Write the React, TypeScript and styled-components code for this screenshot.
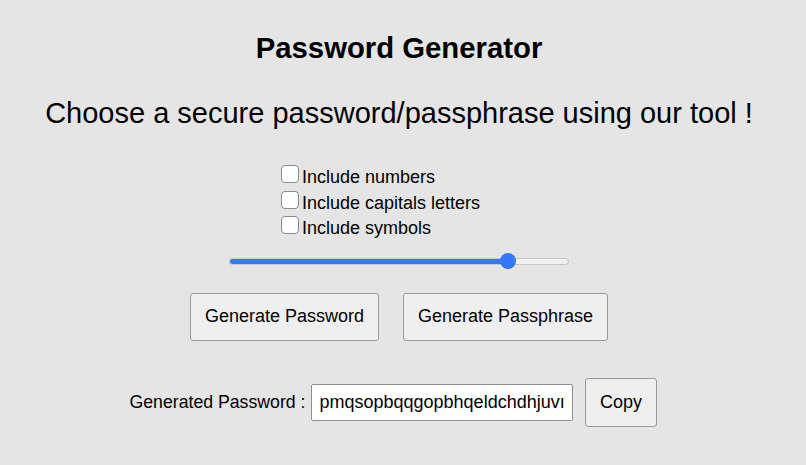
import React, { useState } from "react";
import styled, { createGlobalStyle } from "styled-components";

const Global = createGlobalStyle`
  html, body { margin: 0; padding: 0; background: #e5e5e5; }
  body { font-family: "Liberation Sans", Arial, sans-serif; color: #000; }
`;

const Page = styled.main`
  width: 798px;
  display: flex;
  flex-direction: column;
  align-items: center;
`;

const Title = styled.h1`
  margin: 31px 0 0;
  font-size: 29.3px;
  line-height: 34px;
  font-weight: 700;
`;

const Subtitle = styled.h2`
  margin: 31px 0 0;
  font-size: 29px;
  line-height: 34px;
  font-weight: 400;
  white-space: nowrap;
`;

const Options = styled.div`
  margin-top: 35px;
  width: 238px;
  display: flex;
  flex-direction: column;
`;

const OptionRow = styled.label`
  display: flex;
  align-items: flex-start;
  gap: 3px;
  font-size: 18px;
  line-height: 25.5px;
  padding-left: 1px;
`;

const Box = styled.input`
  appearance: none;
  -webkit-appearance: none;
  margin: 0;
  width: 18px;
  height: 18px;
  box-sizing: border-box;
  border: 1px solid #8a8a8a;
  border-radius: 4px;
  background: #fff;
  flex: none;
`;

const THUMB = 16;
const TRACK_W = 340;

const Range = styled.input<{ $fill: number }>`
  -webkit-appearance: none;
  appearance: none;
  margin: 11.5px 0 0;
  width: ${TRACK_W}px;
  height: 16px;
  background: transparent;
  &::-webkit-slider-runnable-track {
    height: 7px;
    border-radius: 4px;
    box-sizing: border-box;
    border: 1px solid #c6c6c6;
    background: linear-gradient(
      to right,
      #3478f6 0,
      #3478f6 ${(p) => p.$fill}px,
      #efefef ${(p) => p.$fill}px,
      #efefef 100%
    );
  }
  &::-webkit-slider-thumb {
    -webkit-appearance: none;
    width: ${THUMB}px;
    height: ${THUMB}px;
    margin-top: -5.5px;
    border-radius: 50%;
    background: #3478f6;
    border: none;
  }
`;

const Actions = styled.div`
  margin-top: 23.5px;
  display: flex;
  gap: 24px;
`;

const Button = styled.button`
  font-family: "Liberation Sans", Arial, sans-serif;
  font-size: 18px;
  color: #000;
  background: #efefef;
  border: 1px solid #9a9a9a;
  border-radius: 3px;
  padding: 0 14px;
  height: 48px;
  margin: 0;
`;

const ResultRow = styled.div`
  margin-top: 37px;
  padding-right: 12px;
  display: flex;
  align-items: center;
  font-size: 18px;
`;

const ResultLabel = styled.span`
  margin-right: 6px;
  font-size: 17.7px;
`;

const Output = styled.input`
  box-sizing: border-box;
  width: 262px;
  height: 37px;
  margin: 0 12px 0 0;
  padding: 0 7px;
  font-family: "Liberation Sans", Arial, sans-serif;
  font-size: 18px;
  color: #000;
  background: #fff;
  border: 1px solid #8f8f8f;
  border-radius: 2px;
  outline: none;
`;

const CopyButton = styled(Button)`
  height: 49px;
  padding: 0 13.5px;
`;

export default function App() {
  const [len, setLen] = useState(84);
  const options = ["Include numbers", "Include capitals letters", "Include symbols"];
  const fill = THUMB / 2 + (len / 100) * (TRACK_W - THUMB);
  return (
    <>
      <Global />
      <Page>
        <Title>Password Generator</Title>
        <Subtitle>Choose a secure password/passphrase using our tool !</Subtitle>
        <Options>
          {options.map((o) => (
            <OptionRow key={o}>
              <Box type="checkbox" />
              {o}
            </OptionRow>
          ))}
        </Options>
        <Range
          type="range"
          min={0}
          max={100}
          value={len}
          $fill={fill}
          onChange={(e) => setLen(Number(e.target.value))}
        />
        <Actions>
          <Button>Generate Password</Button>
          <Button>Generate Passphrase</Button>
        </Actions>
        <ResultRow>
          <ResultLabel>Generated Password :</ResultLabel>
          <Output readOnly value="pmqsopbqqgopbhqeldchdhjuvıwxkz" />
          <CopyButton>Copy</CopyButton>
        </ResultRow>
      </Page>
    </>
  );
}
